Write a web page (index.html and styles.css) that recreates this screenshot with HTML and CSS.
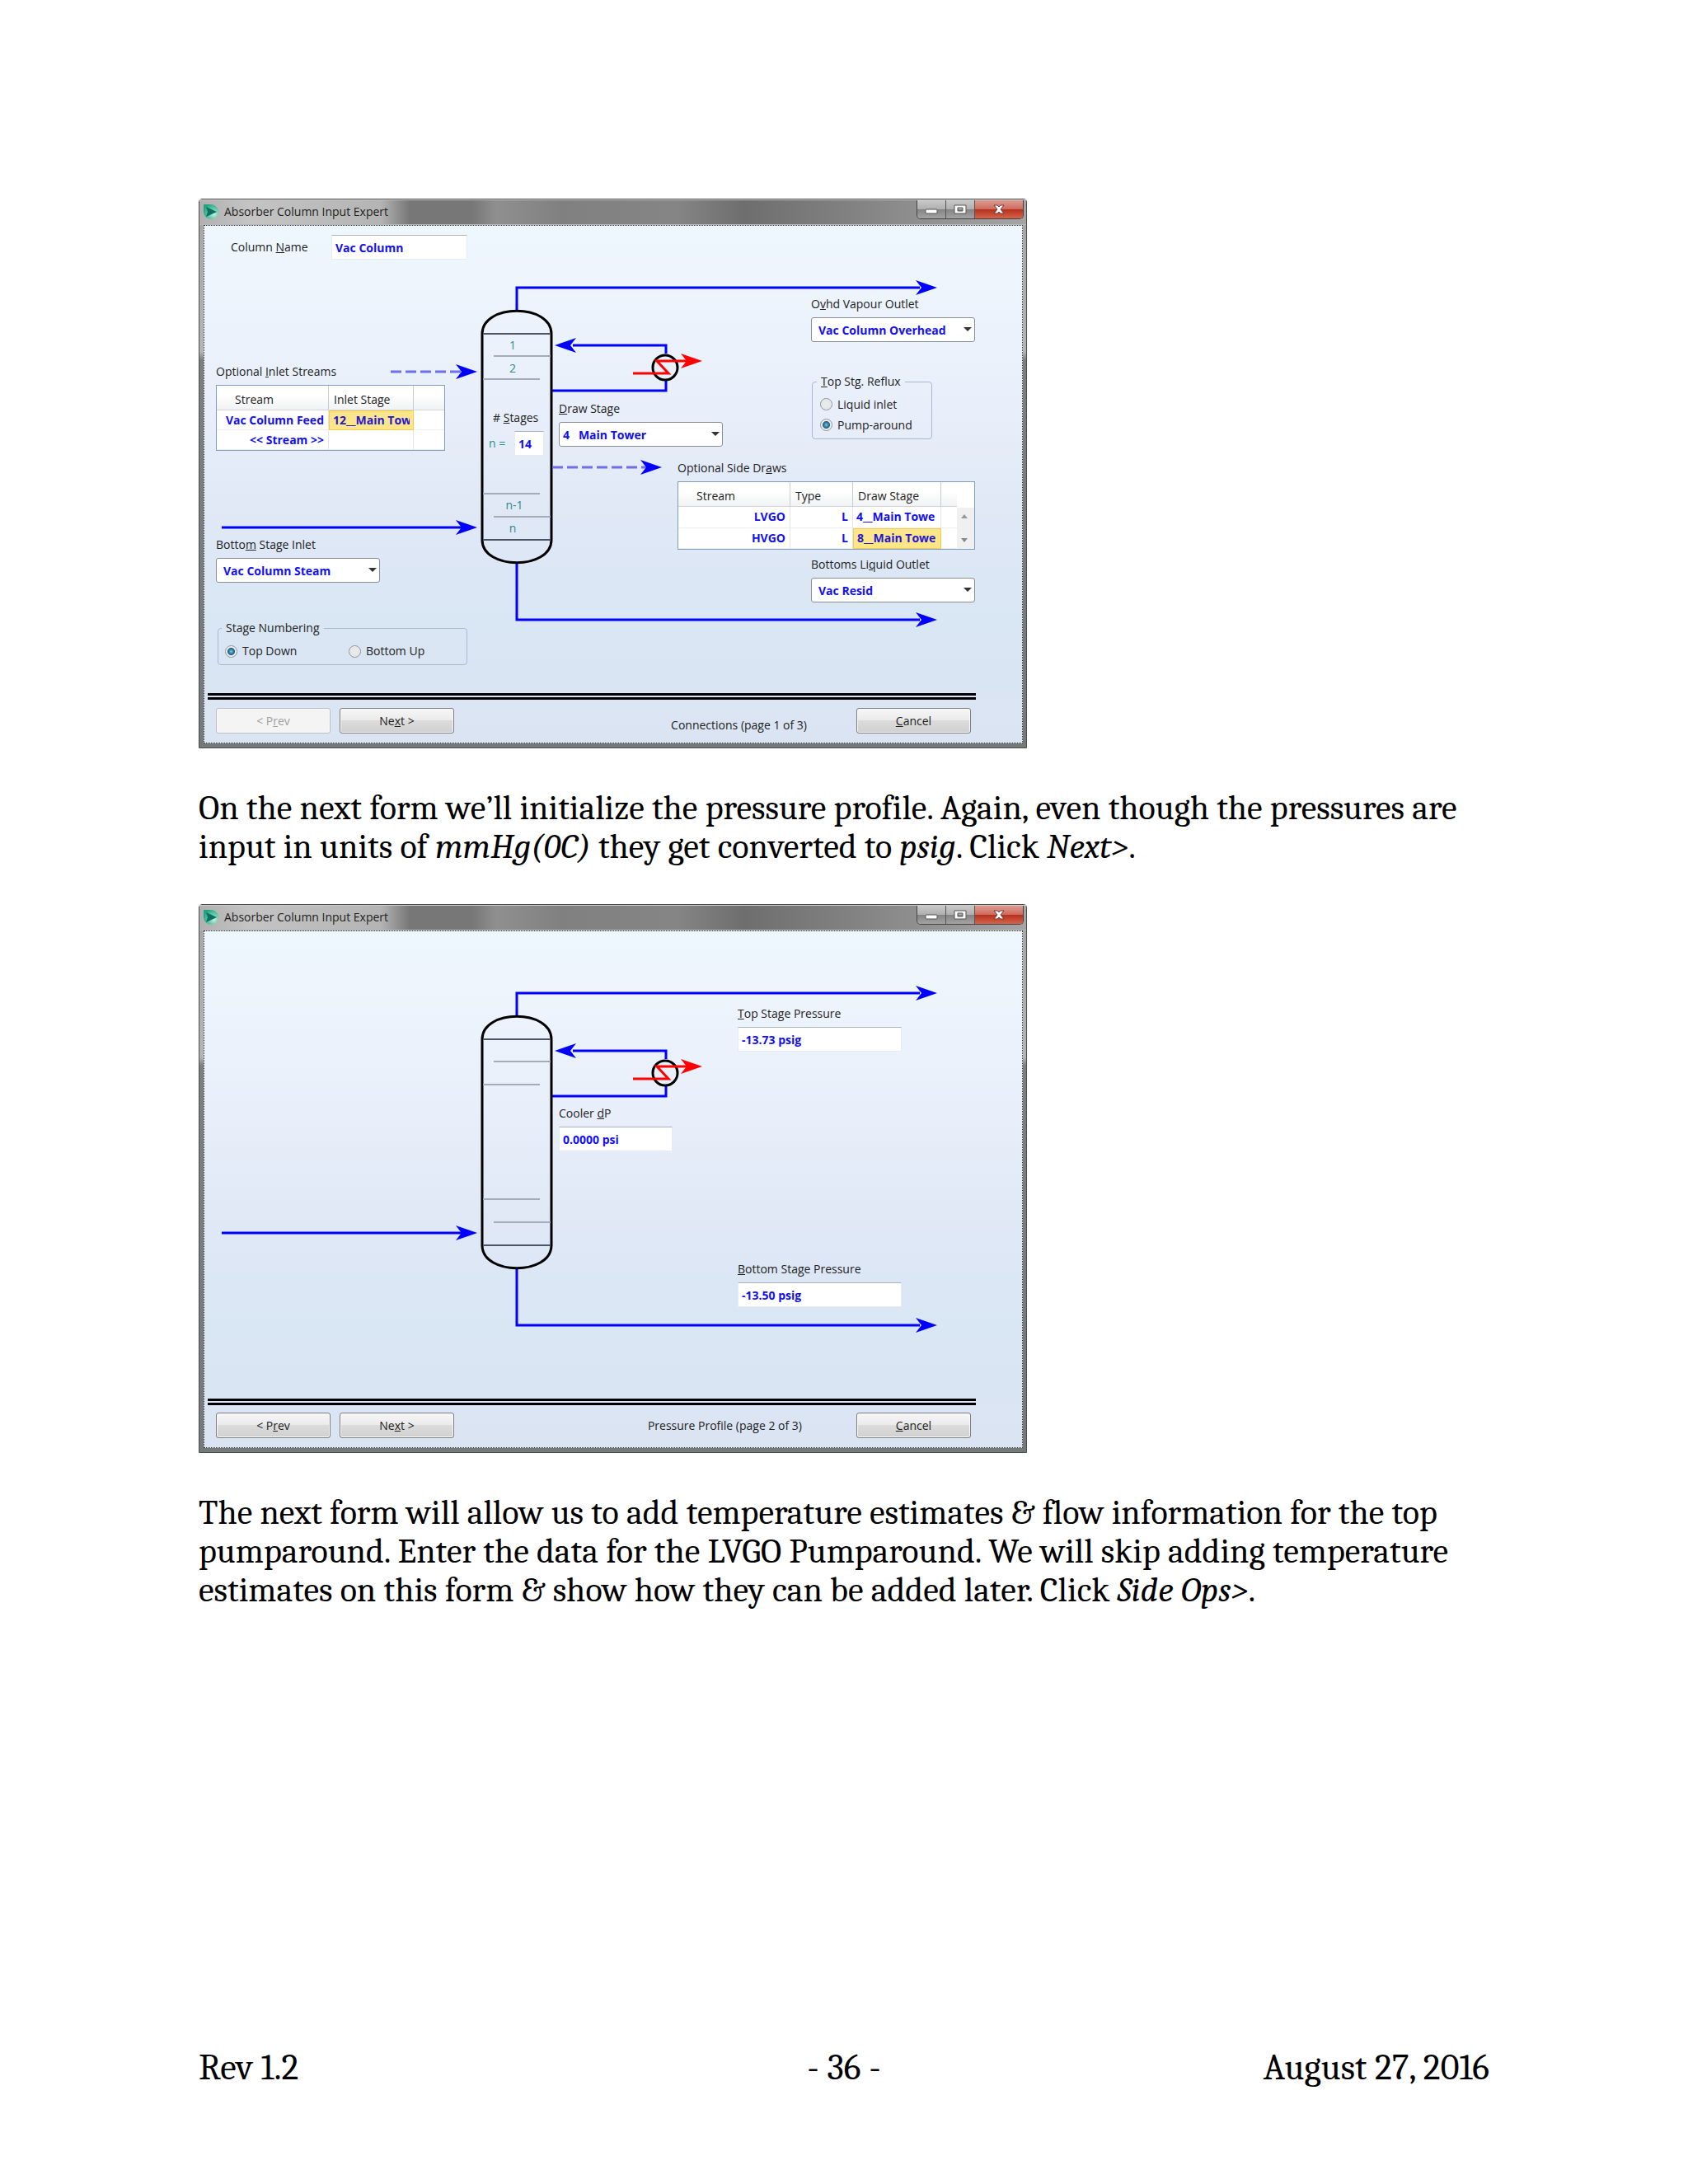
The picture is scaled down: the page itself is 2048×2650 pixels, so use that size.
FILE: index.html
```html
<!DOCTYPE html>
<html lang="en">
<head>
    <meta charset="UTF-8">
    <meta name="viewport" content="width=device-width, initial-scale=1.0">
    <title>Vacuum Column Setup</title>
    <link rel="stylesheet" href="styles.css">
</head>
<body>

    <!-- Shared drawing parts -->
    <svg class="defs" width="0" height="0" aria-hidden="true">
        <defs>
            <radialGradient id="iconFill" cx="70%" cy="65%" r="75%">
                <stop offset="0" stop-color="#c8f0e2"/>
                <stop offset="0.5" stop-color="#5fc9a6"/>
                <stop offset="1" stop-color="#1fa37c"/>
            </radialGradient>
            <g id="appIcon">
                <path d="M1 1h9a9 9 0 1 1-9 9z" fill="url(#iconFill)"/>
                <path d="M4 4l13 6-13 6 2-6z" fill="#0c6f60"/>
            </g>
            <path id="arrow" d="M0 0L-26 -9L-19 0L-26 9z"/>
            <g id="column">
                <g fill="none" stroke="#0000ff" stroke-width="3">
                    <path d="M379 103V75H868"/>
                    <path d="M447 145H560V155"/>
                    <path d="M421 200H560V188"/>
                    <path d="M21 366H312"/>
                    <path d="M379 409V478H868"/>
                </g>
                <g fill="#0000ff">
                    <use href="#arrow" x="889" y="75"/>
                    <use href="#arrow" x="331" y="366"/>
                    <use href="#arrow" x="889" y="478"/>
                    <path d="M425 145l26 -9l-7 9l7 9z"/>
                </g>
                <path d="M337 131C337 94 421 94 421 131V381C421 418 337 418 337 381Z" fill="none" stroke="#000" stroke-width="3"/>
                <path d="M338 131H420M338 381H420" stroke="#4b5563" stroke-width="2"/>
                <path d="M351 158H420M338 186H407M338 325H407M351 353H420" stroke="#a3adb9" stroke-width="2"/>
                <circle cx="559" cy="172" r="15" fill="none" stroke="#000" stroke-width="3"/>
                <path d="M520 179H563L549 164H585" fill="none" stroke="#ff0000" stroke-width="3"/>
                <use href="#arrow" x="604" y="164" fill="#ff0000"/>
            </g>
        </defs>
    </svg>

    <main>
        <!-- Page 1: Connections -->
        <section class="window">
            <header class="titlebar">
                <svg class="app-icon" viewBox="0 0 20 20"><use href="#appIcon"/></svg>
                <h2>Absorber Column Input Expert</h2>
                <div class="window-buttons">
                    <button type="button" aria-label="Minimize"><svg viewBox="0 0 16 12"><rect x="1" y="6" width="14" height="5" rx="1" fill="#fff" stroke="#555"/></svg></button>
                    <button type="button" aria-label="Maximize"><svg viewBox="0 0 16 12"><path d="M1 1h14v10H1zM5 4v4h6V4z" fill="#fff" fill-rule="evenodd" stroke="#555"/></svg></button>
                    <button type="button" class="close" aria-label="Close"><svg viewBox="0 0 16 12"><path d="M2 1h4l2 2 2-2h4l-4 5 4 5h-4L8 9l-2 2H2l4-5z" fill="#fff" stroke="#6b3a36"/></svg></button>
                </div>
            </header>
            <form class="client">
                <div class="schematic">
                    <svg class="diagram" viewBox="0 0 993 566" aria-hidden="true">
                        <use href="#column"/>
                        <g stroke="#6f6fee" stroke-width="3" stroke-dasharray="13 5">
                            <path d="M226 177H312"/>
                            <path d="M422 293H536"/>
                        </g>
                        <use href="#arrow" x="331" y="177" fill="#0000ff"/>
                        <use href="#arrow" x="555" y="293" fill="#0000ff"/>
                        <g class="stage-numbers">
                            <text x="374" y="150">1</text>
                            <text x="374" y="178">2</text>
                            <text x="376" y="344">n-1</text>
                            <text x="374" y="372">n</text>
                        </g>
                    </svg>

                    <div class="col-left">
                        <div class="name-row">
                            <label for="colName">Column <u>N</u>ame</label>
                            <input type="text" id="colName" value="Vac Column">
                        </div>
                        <div class="field inlet-streams">
                            <span class="label">Optional <u>I</u>nlet Streams</span>
                            <table class="inlet-table">
                                <colgroup><col class="c-stream"><col class="c-stage"><col></colgroup>
                                <thead>
                                    <tr><th>Stream</th><th>Inlet Stage</th><th></th></tr>
                                </thead>
                                <tbody>
                                    <tr><td>Vac Column Feed</td><td class="stage selected"><span>12__Main Tow</span></td><td></td></tr>
                                    <tr><td>&lt;&lt; Stream &gt;&gt;</td><td></td><td></td></tr>
                                </tbody>
                            </table>
                        </div>
                        <div class="field bottom-inlet">
                            <label for="bottomInlet">Botto<u>m</u> Stage Inlet</label>
                            <div class="select"><select id="bottomInlet"><option>Vac Column Steam</option></select></div>
                        </div>
                        <fieldset class="numbering">
                            <legend>Sta<u>g</u>e Numbering</legend>
                            <label><input type="radio" name="numbering" checked>Top Down</label>
                            <label><input type="radio" name="numbering">Bottom Up</label>
                        </fieldset>
                    </div>

                    <div class="col-tower">
                        <label for="stages"># <u>S</u>tages</label>
                        <div class="stage-count">
                            <span>n =</span>
                            <input type="text" id="stages" value="14">
                        </div>
                    </div>

                    <div class="col-right">
                        <div class="field outlet">
                            <label for="overhead">O<u>v</u>hd Vapour Outlet</label>
                            <div class="select"><select id="overhead"><option>Vac Column Overhead</option></select></div>
                        </div>
                        <div class="draw-row">
                            <div class="field">
                                <label for="drawStage"><u>D</u>raw Stage</label>
                                <div class="select narrow"><select id="drawStage"><option>4 &nbsp; Main Tower</option></select></div>
                            </div>
                            <fieldset class="reflux">
                                <legend><u>T</u>op Stg. Reflux</legend>
                                <label><input type="radio" name="reflux">Liquid inlet</label>
                                <label><input type="radio" name="reflux" checked>Pump-around</label>
                            </fieldset>
                        </div>
                        <div class="field side-draws">
                            <span class="label">Optional Side Dr<u>a</u>ws</span>
                            <div class="scroll-table">
                                <table>
                                    <colgroup><col class="c-stream"><col class="c-type"><col class="c-draw"><col></colgroup>
                                    <thead>
                                        <tr><th>Stream</th><th>Type</th><th>Draw Stage</th><th></th></tr>
                                    </thead>
                                    <tbody>
                                        <tr><td>LVGO</td><td>L</td><td class="stage"><span>4__Main Towe</span></td><td></td></tr>
                                        <tr><td>HVGO</td><td>L</td><td class="stage selected"><span>8__Main Towe</span></td><td></td></tr>
                                    </tbody>
                                </table>
                                <div class="scrollbar">
                                    <button type="button" class="up" aria-label="Scroll up"></button>
                                    <button type="button" class="down" aria-label="Scroll down"></button>
                                </div>
                            </div>
                        </div>
                        <div class="field outlet">
                            <label for="bottoms">Bottoms Li<u>q</u>uid Outlet</label>
                            <div class="select"><select id="bottoms"><option>Vac Resid</option></select></div>
                        </div>
                    </div>
                </div>

                <div class="actions">
                    <button type="button" disabled>&lt; P<u>r</u>ev</button>
                    <button type="button">Ne<u>x</u>t &gt;</button>
                    <span class="page-label low">Connections (page 1 of 3)</span>
                    <button type="button"><u>C</u>ancel</button>
                </div>
            </form>
        </section>

        <p>On the next form we’ll initialize the pressure profile. Again, even though the pressures are<br>
        input in units of <em>mmHg(0C)</em> they get converted to <em>psig</em>. Click <em>Next&gt;</em>.</p>

        <!-- Page 2: Pressure Profile -->
        <section class="window">
            <header class="titlebar">
                <svg class="app-icon" viewBox="0 0 20 20"><use href="#appIcon"/></svg>
                <h2>Absorber Column Input Expert</h2>
                <div class="window-buttons">
                    <button type="button" aria-label="Minimize"><svg viewBox="0 0 16 12"><rect x="1" y="6" width="14" height="5" rx="1" fill="#fff" stroke="#555"/></svg></button>
                    <button type="button" aria-label="Maximize"><svg viewBox="0 0 16 12"><path d="M1 1h14v10H1zM5 4v4h6V4z" fill="#fff" fill-rule="evenodd" stroke="#555"/></svg></button>
                    <button type="button" class="close" aria-label="Close"><svg viewBox="0 0 16 12"><path d="M2 1h4l2 2 2-2h4l-4 5 4 5h-4L8 9l-2 2H2l4-5z" fill="#fff" stroke="#6b3a36"/></svg></button>
                </div>
            </header>
            <form class="client">
                <div class="schematic">
                    <svg class="diagram" viewBox="0 0 993 566" aria-hidden="true">
                        <use href="#column"/>
                    </svg>
                    <div class="col-left"></div>
                    <div class="col-tower"></div>
                    <div class="col-right pressures">
                        <div class="field stage-pressure">
                            <label for="topPressure"><u>T</u>op Stage Pressure</label>
                            <input type="text" id="topPressure" value="-13.73 psig">
                        </div>
                        <div class="field cooler">
                            <label for="coolerDp">Cooler <u>d</u>P</label>
                            <input type="text" id="coolerDp" value="0.0000 psi">
                        </div>
                        <div class="field stage-pressure">
                            <label for="bottomPressure"><u>B</u>ottom Stage Pressure</label>
                            <input type="text" id="bottomPressure" value="-13.50 psig">
                        </div>
                    </div>
                </div>

                <div class="actions">
                    <button type="button">&lt; P<u>r</u>ev</button>
                    <button type="button">Ne<u>x</u>t &gt;</button>
                    <span class="page-label">Pressure Profile (page 2 of 3)</span>
                    <button type="button"><u>C</u>ancel</button>
                </div>
            </form>
        </section>

        <p>The next form will allow us to add temperature estimates &amp; flow information for the top<br>
        pumparound. Enter the data for the LVGO Pumparound. We will skip adding temperature<br>
        estimates on this form &amp; show how they can be added later. Click <em>Side Ops&gt;</em>.</p>
    </main>

    <footer class="page-footer">
        <span>Rev 1.2</span>
        <span>- 36 -</span>
        <span>August 27, 2016</span>
    </footer>

</body>
</html>
```
FILE: styles.css
```css
* {
    margin: 0;
    padding: 0;
    box-sizing: border-box;
}

body {
    display: flex;
    flex-direction: column;
    min-height: 100vh;
    padding: 241px 241px 118px;
    background-color: #fff;
    color: #000;
    font-family: Cambria, Caladea, "Liberation Serif", serif;
    font-size: 42px;
    line-height: 47px;
}

main {
    flex: 1;
}

p {
    margin: 49px 0 46px;
    white-space: nowrap;
}

.defs {
    position: absolute;
}

.page-footer {
    display: grid;
    grid-template-columns: 1fr auto 1fr;
    font-size: 44px;
}

.page-footer span:last-child {
    text-align: right;
}

/* Window frame */
.window {
    width: 100%;
    max-width: 1005px;
    padding: 0 4px 5px 5px;
    border: 1px solid #4a4d4d;
    border-radius: 4px 4px 0 0;
    background: linear-gradient(#a5a5a5 0, #b4b4b4 185px, #7b7f80 195px, #757979 100%);
    color: #222;
    font-family: "Segoe UI", "Open Sans", "Noto Sans", sans-serif;
    font-size: 14px;
    line-height: 20px;
}

.titlebar {
    display: flex;
    align-items: center;
    height: 31px;
    margin: 0 -4px 0 -5px;
    padding: 0 3px 2px 4px;
    border-top: 1px solid #ccc;
    border-bottom: 1px solid #b8b8b8;
    background: linear-gradient(90deg, #b0b0b0 0, #c4c4c4 60px, #b4b4b4 220px, #777 255px, #777 330px, #8f8f8f 360px, #808080 440px, #858585 580px, #6e6e6e 660px, #808080 780px, #a5a5a5 100%);
}

.titlebar h2 {
    flex: 1;
    margin-left: 6px;
    font-size: 14px;
    font-weight: normal;
}

.app-icon {
    width: 20px;
    height: 20px;
}

.window-buttons {
    display: flex;
    align-self: flex-start;
    height: 23px;
    border: 1px solid #444;
    border-top: none;
    border-radius: 0 0 5px 5px;
    overflow: hidden;
}

.window-buttons button {
    width: 35px;
    border: none;
    border-right: 1px solid #555;
    background: linear-gradient(#c9c9c9 0, #b0b0b0 48%, #838383 50%, #a3a3a3 100%);
}

.window-buttons .close {
    width: 58px;
    border-right: none;
    background: linear-gradient(#dd9c92 0, #cf6b5c 48%, #b5301c 50%, #d4644a 100%);
}

.window-buttons svg {
    display: block;
    width: 16px;
    height: 12px;
    margin: 0 auto;
}

/* Client area */
.client {
    border: 1px dotted #333;
    background: linear-gradient(#eff7fe 0, #e8effa 35%, #e0e8f6 56%, #d9e6f4 76%, #dbe4f2 100%);
}

.schematic {
    position: relative;
    display: grid;
    grid-template-columns: 305px 84px 514px;
    column-gap: 9px;
    min-height: 567px;
    padding-left: 14px;
}

.diagram {
    position: absolute;
    top: 0;
    left: 0;
    width: 993px;
    height: 566px;
}

.stage-numbers {
    fill: #2e8b8b;
    font-size: 14px;
    text-anchor: middle;
}

.col-left,
.col-tower,
.col-right {
    position: relative;
    display: flex;
    flex-direction: column;
}

.col-left {
    padding-top: 11px;
}

.col-tower {
    gap: 6px;
    margin-left: 9px;
    margin-right: -9px;
    padding-top: 223px;
}

.col-tower label {
    margin-left: 13px;
}

.col-right {
    margin-left: 9px;
    padding-top: 85px;
}

.field {
    display: flex;
    flex-direction: column;
    gap: 6px;
}

input[type="text"],
select {
    height: 30px;
    color: #120ff0;
    font-family: inherit;
    font-size: 14px;
    font-weight: bold;
}

input[type="text"] {
    padding: 0 4px;
    border: 1px solid #e6ecf3;
    border-top-color: #abb4bd;
    background-color: #fff;
}

.select {
    position: relative;
    width: 199px;
}

.select::after {
    content: "";
    position: absolute;
    top: 12px;
    right: 4px;
    border: 5px solid transparent;
    border-top-color: #333;
    border-bottom: none;
}

select {
    width: 100%;
    padding: 0 8px;
    border: 1px solid #8a8f96;
    border-radius: 3px;
    background-color: #fff;
    appearance: none;
}

.narrow select {
    padding: 0 4px;
}

/* Left side */
.name-row {
    display: flex;
    align-items: center;
    justify-content: space-between;
    padding-left: 18px;
}

.name-row input {
    width: 165px;
}

.inlet-streams {
    margin-top: 126px;
}

.bottom-inlet {
    margin-top: 104px;
}

fieldset {
    border: 1px solid #a9b9d2;
    border-radius: 4px;
}

legend {
    margin-left: -4px;
    padding: 0 5px;
}

fieldset label {
    display: flex;
    align-items: center;
    gap: 6px;
}

.numbering {
    display: grid;
    grid-template-columns: 150px 1fr;
    height: 55px;
    margin: 45px 0 0 2px;
    padding: 8px 8px 4px;
}

input[type="radio"] {
    width: 15px;
    height: 15px;
    border: 1px solid #8d9299;
    border-radius: 50%;
    background: radial-gradient(#e8eaec 40%, #c9cdd2 100%);
    box-shadow: inset 0 0 0 1px #f4f4f4;
    appearance: none;
}

input[type="radio"]:checked {
    background: radial-gradient(#6fc8e4 0, #1d5c80 4px, #e4e8ec 5px);
}

/* Tables */
table {
    width: 100%;
    border-collapse: separate;
    border-spacing: 0;
    table-layout: fixed;
    background-color: #fff;
}

th,
td {
    overflow: hidden;
    white-space: nowrap;
    border-right: 1px solid #e3e6ea;
}

th {
    height: 30px;
    padding: 4px 6px 0;
    border-right-color: #c8ccd0;
    border-bottom: 1px solid #d5d5d5;
    background: linear-gradient(#fff 40%, #f1f2f3);
    font-weight: normal;
    text-align: left;
}

th:first-child {
    padding-left: 22px;
}

th:last-child,
td:last-child {
    border-right: none;
}

td {
    height: 24px;
    padding: 0 5px;
    border-bottom: 1px solid #eceef0;
    color: #120ff0;
    font-weight: bold;
    text-align: right;
}

td.stage {
    padding: 0 4px;
    text-align: left;
}

td.stage span {
    display: block;
    overflow: hidden;
}

td.selected {
    border: 1px solid #f0cd50;
    background-color: #fde68a;
    color: #2216d0;
}

.inlet-table {
    width: 278px;
    height: 80px;
    border: 1px solid #7f9dbf;
}

.c-stream {
    width: 136px;
}

.c-stage {
    width: 103px;
}

.c-type {
    width: 76px;
}

.c-draw {
    width: 107px;
}

.scroll-table {
    display: flex;
    height: 83px;
    border: 1px solid #7f9dbf;
    background-color: #fff;
}

.scrollbar {
    display: flex;
    flex: 0 0 21px;
    flex-direction: column;
    justify-content: space-between;
    margin-top: 31px;
    padding: 8px 5px;
    background-color: #f0f0f0;
}

.scrollbar button {
    width: 8px;
    height: 5px;
    border: 4px solid transparent;
    background: none;
}

.scrollbar .up {
    border-top: none;
    border-bottom: 5px solid #999;
}

.scrollbar .down {
    border-top: 5px solid #888;
    border-bottom: none;
}

/* Tower and right side */
.stage-count {
    display: flex;
    align-items: center;
    justify-content: space-between;
    padding: 0 9px 0 8px;
    color: #2e8b8b;
}

.stage-count input {
    width: 36px;
}

.outlet {
    align-self: flex-end;
}

.draw-row {
    display: flex;
    align-items: flex-end;
    justify-content: space-between;
    margin-top: 38px;
}

.reflux {
    width: 146px;
    height: 80px;
    margin: 0 52px 9px 0;
    padding: 5px 9px;
}

.reflux label {
    height: 25px;
}

.side-draws {
    width: 361px;
    margin: 16px 0 8px;
    align-self: flex-end;
}

.pressures {
    padding-top: 90px;
}

.stage-pressure {
    width: 199px;
    margin-left: 217px;
}

.cooler {
    width: 138px;
    margin: 65px 0 133px;
}

/* Bottom buttons */
.actions {
    display: flex;
    align-items: center;
    gap: 11px;
    margin: 0 56px 0 4px;
    padding: 9px 6px 11px 10px;
    border-top: 8px double #000;
}

.actions button {
    width: 139px;
    height: 31px;
    border: 1px solid #7d7d7d;
    border-radius: 3px;
    background: linear-gradient(#f6f6f6 0, #ebebeb 48%, #dcdcdc 50%, #d0d0d0 100%);
    box-shadow: inset 0 0 0 1px #fafafa;
    color: #222;
    font-family: inherit;
    font-size: 14px;
}

.actions button:disabled {
    border-color: #b8bec6;
    background: #f4f4f4;
    color: #a0a0a0;
}

.page-label {
    flex: 1;
    padding-right: 55px;
    text-align: right;
}

.low {
    padding-top: 12px;
    padding-right: 49px;
}
```
